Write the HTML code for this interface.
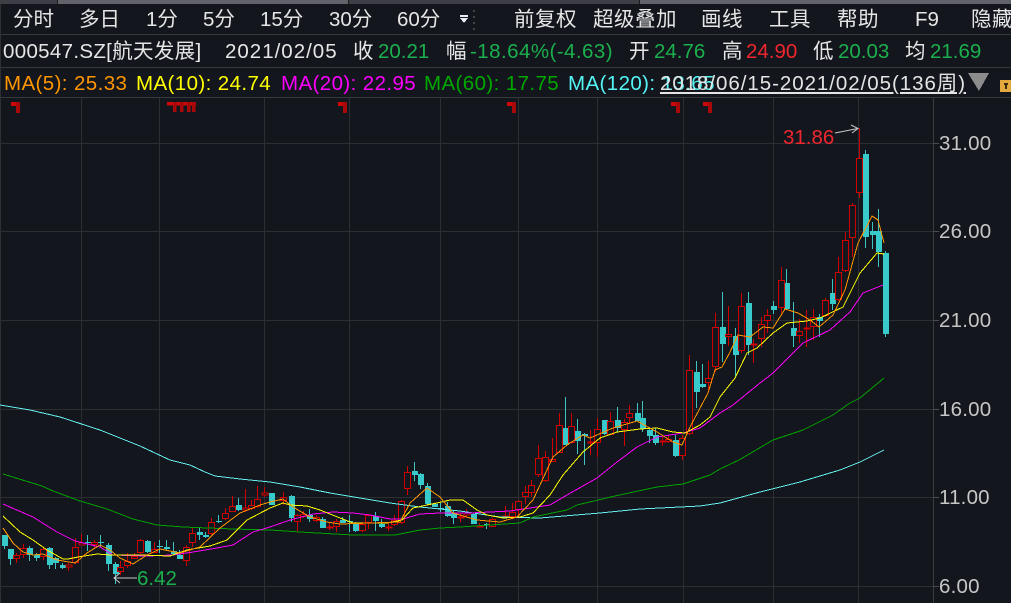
<!DOCTYPE html>
<html><head><meta charset="utf-8"><style>
html,body{margin:0;padding:0;background:#13161c}
#p{position:relative;width:1011px;height:603px;overflow:hidden;background:#13161c;font-family:"Liberation Sans","Noto Sans CJK SC",sans-serif;font-size:20.5px;color:#e6e6e6}
#p span{position:absolute;white-space:nowrap;line-height:24px}
.a{top:8px}.b{top:40px}.c{top:72px}.g{color:#1bb04e}.r{color:#f0262e}.x{color:#c6c6c6;left:939px;letter-spacing:.2px}
svg{position:absolute;left:0;top:0}
</style></head><body><div id="p">
<svg id="s" width="1011" height="603" viewBox="0 0 1011 603" shape-rendering="crispEdges"></svg>
<span class="a" style="left:13px">分时</span><span class="a" style="left:79px">多日</span><span class="a" style="left:146px">1分</span><span class="a" style="left:203px">5分</span><span class="a" style="left:260px">15分</span><span class="a" style="left:329px">30分</span><span class="a" style="left:397px">60分</span>
<span class="a" style="left:514px;letter-spacing:.5px">前复权</span><span class="a" style="left:593px;letter-spacing:.5px">超级叠加</span><span class="a" style="left:701px;letter-spacing:.5px">画线</span><span class="a" style="left:769px;letter-spacing:.5px">工具</span><span class="a" style="left:837px;letter-spacing:.5px">帮助</span><span class="a" style="left:915px">F9</span><span class="a" style="left:971px;letter-spacing:.5px">隐藏</span>
<span class="b" style="left:3px;letter-spacing:.32px">000547.SZ[航天发展]</span><span class="b" style="left:225px;letter-spacing:1px">2021/02/05</span><span class="b" style="left:353px">收</span><span class="b g" style="left:378px">20.21</span><span class="b" style="left:446px">幅</span><span class="b g" style="left:470px;letter-spacing:.45px">-18.64%(-4.63)</span><span class="b" style="left:629px">开</span><span class="b g" style="left:654px">24.76</span><span class="b" style="left:722px">高</span><span class="b r" style="left:746px">24.90</span><span class="b" style="left:813px">低</span><span class="b g" style="left:838px">20.03</span><span class="b" style="left:905px">均</span><span class="b g" style="left:930px">21.69</span>
<span class="c" style="left:4px;color:#ff9600;letter-spacing:.4px">MA(5): 25.33</span><span class="c" style="left:136px;color:#ffff00;letter-spacing:.4px">MA(10): 24.74</span><span class="c" style="left:281px;color:#ff00ff;letter-spacing:.4px">MA(20): 22.95</span><span class="c" style="left:424px;color:#00a800;letter-spacing:.4px">MA(60): 17.75</span><span class="c" style="left:568px;color:#55f5f5;letter-spacing:.4px">MA(120): 13.65</span>
<span class="c" style="left:660px;color:#e4e4e4;letter-spacing:.95px;text-decoration:underline">2018/06/15-2021/02/05(136周)</span>
<span class="x" style="top:132px">31.00</span><span class="x" style="top:220px">26.00</span><span class="x" style="top:309px">21.00</span><span class="x" style="top:398px">16.00</span><span class="x" style="top:486px">11.00</span><span class="x" style="top:575px">6.00</span>
<span class="r" style="left:783px;top:126px">31.86</span><span class="g" style="left:137px;top:567px">6.42</span>
</div>
<script>
var o='';
function R(x,y,w,h,f){o+='<rect x="'+x+'" y="'+y+'" width="'+w+'" height="'+h+'" fill="'+f+'"/>';}
R(0,0,1011,4,'#3e3e46');R(58,0,290,4,'#62626a');R(639,0,372,4,'#62626a');R(57,0,1,4,'#1c1c20');R(348,0,1,4,'#1c1c20');R(639,0,1,4,'#1c1c20');
R(0,34,1011,1,'#36393d');R(0,67,1011,1,'#36393d');R(0,97,1011,1,'#36393d');R(0,4,1,599,'#2e3034');
[81,159,264,349,440,518,597,683,773,858].forEach(function(x){R(x,98,1,505,'#2c2e32');});
R(933,98,1,505,'#3a3c40');
[143,231,320,409,497,586].forEach(function(y){R(0,y,933,1,'#2c2e32');R(933,y,6,1,'#4a4c50');});
R(460,15,8,2,'#e8eef5');R(473,10,2,2,'#444');R(473,16,2,2,'#444');R(473,22,2,2,'#444');R(473,28,2,2,'#444');
o+='<polygon points="460,18 468,18 464,23" fill="#e8eef5"/>';
[11,338,507,671,703].forEach(function(x){R(x,102,9,4,'#cc0808');R(x+5,102,4,11,'#a80808');});
R(167,102,29,3.5,'#cc0808');[173,180,187,192].forEach(function(x){R(x,102,3.5,10,'#a80808');});
o+='<polygon points="968,73 989,73 979,91" fill="#8c8c8c"/>';R(1000,80,11,12,'#e3a93c');R(1005,83,2,6,'#3a2a08');R(1004,83,4,2,'#3a2a08');
var D=[
[460,[[3.5,225,225,258,268,0],[9.5,267,267,296,315,0],[16,280,285,296,308,1],[22.5,252,265,285,295,1],[29,258,265,285,302,0],[35.5,280,285,293,302,0],[42.5,262,268,292,300,1],[49,260,265,315,327,0],[55,290,295,308,327,0],[61.5,308,315,323,327,0],[68,308,316,322,332,1],[74.5,235,262,310,312,1],[81,222,248,256,256,1],[87,225,246,248,272,0],[94,240,247,256,265,1],[100,225,245,247,262,0],[107.5,250,255,312,333,0],[114.5,305,312,342,372,0],[120,302,322,335,345,1],[127,280,303,318,325,1],[133.5,278,287,298,298,1],[140,236,240,280,282,1],[146.5,240,243,277,280,0],[153.5,246,268,278,280,1],[159,240,259,261,278,0],[166,240,262,268,272,0],[172.5,246,272,283,285,0],[179,270,285,298,298,0],[185.5,255,262,302,318,1],[192,205,220,250,262,1],[198.5,200,215,225,240,0],[205,215,225,230,235,0],[211,175,185,222,225,1],[218,165,183,186,190,0],[225,145,160,178,180,1],[231.5,108,137,155,157,1],[238,113,135,150,152,0],[244.5,88,145,150,155,1],[251,120,136,146,150,1],[257,78,118,140,145,1],[264,82,100,104,110,1]]],
[440,[[271,158,158,195,195,0],[283,155,170,182,195,1],[290.5,165,168,233,245,0],[296.5,222,226,245,272,1],[303,212,222,232,235,1],[309,208,225,238,245,0],[316,225,232,242,245,1],[322,232,236,263,265,0],[329,250,260,263,270,1],[336,238,242,262,275,1],[342,232,240,250,250,0],[349,225,244,246,275,0],[355,245,250,272,275,0],[362,245,252,272,275,1],[368,222,225,250,268,1],[375,217,228,243,272,0],[381,238,252,262,265,0],[388,250,261,263,272,1],[394,225,240,256,258,1],[401,180,182,250,252,1],[407,78,95,148,165,1],[414,67,94,105,122,0],[420,98,102,134,148,0],[427,130,138,192,195,0],[434,192,192,200,200,0],[440,190,203,205,215,0],[447,185,198,228,230,0],[453,210,220,234,252,0],[460,218,231,233,245,1],[466,208,220,226,235,1],[473,218,222,252,252,0],[479,250,257,259,262,1],[486,250,252,254,268,0],[492,235,238,260,262,1],[505,198,229,231,232,1],[512,190,215,232,235,1],[518,180,184,210,232,1]]],
[380,[[525,318,337,352,372,1],[531,300,316,338,352,1],[538,195,235,285,292,1],[544.5,213,232,302,305,1],[551.5,175,238,245,245,1],[558.5,98,135,218,220,1],[564.5,52,144,195,195,0],[571,98,138,188,190,1],[577,117,153,182,222,0],[584,160,163,168,255,0],[590,150,187,189,225,1],[597,115,148,190,232,1],[603.5,120,120,162,165,0],[610,95,123,165,165,1],[616.5,82,120,145,155,0],[623.5,118,127,150,198,1],[629,75,100,115,130,1],[636.5,70,98,122,122,0],[642,63,114,148,155,0],[649,140,150,167,190,0],[655,145,165,188,195,0],[662,170,184,186,198,1],[668,165,178,185,190,1]]],
[250,[[675,555,570,618,622,0],[682,555,565,617,630,1],[688.5,315,361,553,555,1],[695.5,333,366,425,473,0],[701.5,342,402,411,415,0],[708,333,385,398,425,1],[714.5,190,232,352,365,1],[721.5,126,232,282,335,0],[727.5,168,252,260,288,1],[734.5,235,258,315,385,0],[740.5,130,169,302,310,1],[747.5,126,159,285,315,0],[753,268,282,284,340,1],[760.5,200,223,268,290,1],[766.5,178,196,214,248,1],[773,153,168,180,192,0],[780.5,52,91,173,188,1],[786,57,99,176,180,0]]],
[110,[[793,576,655,678,710,0],[799,628,664,677,698,1],[806,600,655,657,710,1],[812.5,598,622,650,690,1],[819,612,622,632,682,0],[825,565,571,617,620,1],[832,507,549,581,600,0],[838,442,487,570,572,1],[845,365,391,482,487,1],[851.5,280,285,385,440,1],[858.5,55,145,250,265,1],[864.5,120,132,380,413,0],[871.5,335,364,375,418,0],[877.5,297,363,427,470,0],[884.5,424,430,671,680,0]]]
];
var rw='',cw='',rb='',cb='';
D.forEach(function(g){var t=g[0];g[1].forEach(function(c){
 var x=Math.round(c[0]),a=t+c[1]/3,b=t+c[2]/3,d=t+c[3]/3,e=t+c[4]/3;
 a=Math.round(a);b=Math.round(b);d=Math.round(d);e=Math.round(e);if(d<=b)d=b+1;
 if(c[5]){rw+='M'+(x+.5)+' '+a+'V'+b+'M'+(x+.5)+' '+d+'V'+e;
  if(d-b<=2)rb+='M'+(x-2)+' '+b+'h6v'+(d-b)+'h-6z';
  else rb+='M'+(x-2.5)+' '+(b+.5)+'h6v'+(d-b-1)+'h-6z';
 }else{cw+='M'+(x+.5)+' '+a+'V'+e;cb+='M'+(x-2)+' '+b+'h6v'+(d-b)+'h-6z';}
});});
o+='<path d="'+cw+'" stroke="#3fc4c4" stroke-width="1" fill="none"/><path d="'+cb+'" fill="#38caca"/>';
o+='<path d="'+rw+'" stroke="#d00000" stroke-width="1.2" fill="none"/><path d="'+rb+'" fill="#13161c" stroke="#d00000" stroke-width="1.4"/>';
function L(c,s){o+='<polyline points="'+s+'" fill="none" stroke="'+c+'" stroke-width="1" shape-rendering="crispEdges"/>';}
L('#66f0f0','0,405 30,410 60,417 100,430 140,446 170,460 190,465 205,472 215,476 240,479 270,482 300,487 330,493 360,498 390,503 420,507 460,511 500,517 540,518 600,513 640,509 680,507 700,506 720,503 760,492 800,482 840,470 860,462 884,450');
L('#00a000','3,474 42,486 53,491 80,501 107,509 133,519 157,525 183,527 233,529 270,530 300,532 335,534 353,535 395,535 405,533 420,530 440,528 460,527 490,525 520,523 533,517 567,510 577,505 615,496 657,487 683,484 710,475 720,469 739,460 773,440 803,430 833,415 850,403 860,398 884,378');
L('#ff00ff','3,504 33,517 57,532 75,541 100,547 113,555 147,556 173,555 193,552 217,548 233,545 253,532 270,527 290,520 313,514 333,512 353,513 370,515 390,519 403,519 420,514 440,513 470,513 510,511 550,505 567,495 597,478 617,462 637,447 657,437 683,433 700,428 720,413 733,405 760,383 773,373 803,343 830,330 850,312 863,293 883,285');
L('#ffff00','3,516 20,532 33,540 47,550 63,559 68,559 78,557 97,554 110,555 140,555 170,556 187,550 210,546 227,540 247,520 270,508 283,503 290,505 307,506 320,510 340,518 353,523 387,523 402,520 413,508 427,505 437,503 450,500 463,500 477,510 487,515 503,518 520,517 533,513 550,495 563,475 583,452 600,438 617,432 640,429 657,428 673,432 685,433 700,425 710,417 720,397 735,378 747,353 757,348 773,333 787,323 807,321 820,318 843,307 860,273 877,253 884,254');
L('#ff9600','3,528 13,543 23,552 33,555 43,554 57,560 75,563 87,553 100,545 110,550 120,558 133,564 147,555 160,549 180,553 200,547 220,528 240,513 260,505 270,502 283,499 293,507 310,517 327,522 340,524 370,523 400,522 410,503 427,488 440,497 453,513 477,520 500,522 517,517 533,500 553,457 567,445 583,435 590,438 613,428 637,421 657,432 673,442 682,445 690,427 708,393 715,370 722,367 730,352 738,335 750,337 763,327 773,328 785,309 798,313 810,320 819,327 833,315 845,290 858,243 872,216 878,220 884,243');
o+='<g fill="none" stroke="#c8c8c8" stroke-width="1" shape-rendering="auto"><path d="M835 133L858 128.5M851 125L858 128.5L852 133"/><path d="M137 578H114M120 573L114 578L120 583"/></g>';
document.getElementById('s').innerHTML=o;
</script>
</body></html>
